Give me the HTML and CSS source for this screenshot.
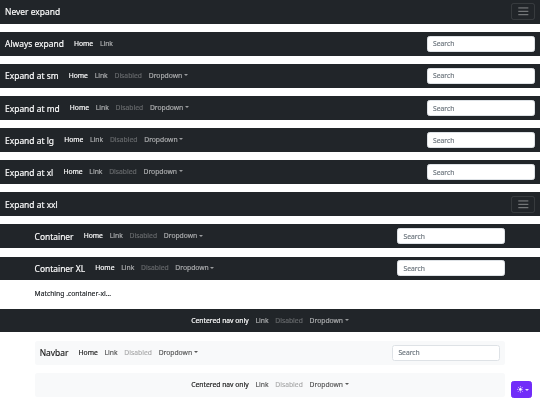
FILE: index.html
```html
<!DOCTYPE html>
<html lang="en">
<head>
<meta charset="utf-8">
<title>Navbar examples</title>
<link rel="stylesheet" href="styles.css">
</head>
<body>
<main class="page">
  <nav class="navbar dark">
    <div class="cfluid">
      <a class="brand" href="#">Never expand</a>
      <button class="toggler" type="button" aria-label="Toggle navigation"><svg viewBox="0 0 30 30" class="toggler-icon"><path d="M4 7h22M4 15h22M4 23h22" stroke="rgba(255,255,255,0.55)" stroke-width="2" stroke-linecap="round"/></svg></button>
    </div>
  </nav>

  <nav class="navbar dark">
    <div class="cfluid">
      <a class="brand" href="#">Always expand</a>
      <div class="collapse">
        <ul class="nav me-auto">
          <li><a class="link active" href="#">Home</a></li>
          <li><a class="link" href="#">Link</a></li>
        </ul>
        <form role="search"><input class="search" type="search" placeholder="Search" aria-label="Search"></form>
      </div>
    </div>
  </nav>

  <nav class="navbar dark">
    <div class="cfluid">
      <a class="brand" href="#">Expand at sm</a>
      <div class="collapse">
        <ul class="nav me-auto">
          <li><a class="link active" href="#">Home</a></li>
          <li><a class="link" href="#">Link</a></li>
          <li><a class="link disabled">Disabled</a></li>
          <li><a class="link caret" href="#">Dropdown</a></li>
        </ul>
        <form role="search"><input class="search" type="search" placeholder="Search" aria-label="Search"></form>
      </div>
    </div>
  </nav>

  <nav class="navbar dark">
    <div class="cfluid">
      <a class="brand" href="#">Expand at md</a>
      <div class="collapse">
        <ul class="nav me-auto">
          <li><a class="link active" href="#">Home</a></li>
          <li><a class="link" href="#">Link</a></li>
          <li><a class="link disabled">Disabled</a></li>
          <li><a class="link caret" href="#">Dropdown</a></li>
        </ul>
        <form role="search"><input class="search" type="search" placeholder="Search" aria-label="Search"></form>
      </div>
    </div>
  </nav>

  <nav class="navbar dark">
    <div class="cfluid">
      <a class="brand" href="#">Expand at lg</a>
      <div class="collapse">
        <ul class="nav me-auto">
          <li><a class="link active" href="#">Home</a></li>
          <li><a class="link" href="#">Link</a></li>
          <li><a class="link disabled">Disabled</a></li>
          <li><a class="link caret" href="#">Dropdown</a></li>
        </ul>
        <form role="search"><input class="search" type="search" placeholder="Search" aria-label="Search"></form>
      </div>
    </div>
  </nav>

  <nav class="navbar dark">
    <div class="cfluid">
      <a class="brand" href="#">Expand at xl</a>
      <div class="collapse">
        <ul class="nav me-auto">
          <li><a class="link active" href="#">Home</a></li>
          <li><a class="link" href="#">Link</a></li>
          <li><a class="link disabled">Disabled</a></li>
          <li><a class="link caret" href="#">Dropdown</a></li>
        </ul>
        <form role="search"><input class="search" type="search" placeholder="Search" aria-label="Search"></form>
      </div>
    </div>
  </nav>

  <nav class="navbar dark">
    <div class="cfluid">
      <a class="brand" href="#">Expand at xxl</a>
      <button class="toggler" type="button" aria-label="Toggle navigation"><svg viewBox="0 0 30 30" class="toggler-icon"><path d="M4 7h22M4 15h22M4 23h22" stroke="rgba(255,255,255,0.55)" stroke-width="2" stroke-linecap="round"/></svg></button>
    </div>
  </nav>

  <nav class="navbar dark">
    <div class="container">
      <a class="brand" href="#">Container</a>
      <div class="collapse">
        <ul class="nav me-auto">
          <li><a class="link active" href="#">Home</a></li>
          <li><a class="link" href="#">Link</a></li>
          <li><a class="link disabled">Disabled</a></li>
          <li><a class="link caret" href="#">Dropdown</a></li>
        </ul>
        <form role="search"><input class="search" type="search" placeholder="Search" aria-label="Search"></form>
      </div>
    </div>
  </nav>

  <nav class="navbar dark">
    <div class="container">
      <a class="brand" href="#">Container XL</a>
      <div class="collapse">
        <ul class="nav me-auto">
          <li><a class="link active" href="#">Home</a></li>
          <li><a class="link" href="#">Link</a></li>
          <li><a class="link disabled">Disabled</a></li>
          <li><a class="link caret" href="#">Dropdown</a></li>
        </ul>
        <form role="search"><input class="search" type="search" placeholder="Search" aria-label="Search"></form>
      </div>
    </div>
  </nav>

  <div class="container block mb-4">
    <p class="para">Matching .container-xl...</p>
  </div>

  <nav class="navbar dark">
    <div class="cfluid">
      <div class="collapse center">
        <ul class="nav">
          <li><a class="link active" href="#">Centered nav only</a></li>
          <li><a class="link" href="#">Link</a></li>
          <li><a class="link disabled">Disabled</a></li>
          <li><a class="link caret" href="#">Dropdown</a></li>
        </ul>
      </div>
    </div>
  </nav>

  <div class="container block">
    <nav class="navbar light rounded">
      <div class="cfluid">
        <a class="brand" href="#">Navbar</a>
        <div class="collapse">
          <ul class="nav me-auto">
            <li><a class="link active" href="#">Home</a></li>
            <li><a class="link" href="#">Link</a></li>
            <li><a class="link disabled">Disabled</a></li>
            <li><a class="link caret" href="#">Dropdown</a></li>
          </ul>
          <form role="search"><input class="search" type="search" placeholder="Search" aria-label="Search"></form>
        </div>
      </div>
    </nav>

    <nav class="navbar light rounded">
      <div class="cfluid">
        <div class="collapse center">
          <ul class="nav">
            <li><a class="link active" href="#">Centered nav only</a></li>
            <li><a class="link" href="#">Link</a></li>
            <li><a class="link disabled">Disabled</a></li>
            <li><a class="link caret" href="#">Dropdown</a></li>
          </ul>
        </div>
      </div>
    </nav>
  </div>
</main>

<button class="mode-toggle" type="button" aria-label="Toggle theme">
  <svg class="sun" viewBox="0 0 16 16" aria-hidden="true"><circle cx="8" cy="8" r="3.2" fill="#fff"/><g stroke="#fff" stroke-width="1.4" stroke-linecap="round"><path d="M8 .8v1.6M8 13.6v1.6M.8 8h1.6M13.6 8h1.6M2.9 2.9l1.1 1.1M12 12l1.1 1.1M2.9 13.1 4 12M12 4l1.1-1.1"/></g></svg>
  <span class="tcaret"></span>
</button>
</body>
</html>
```

FILE: styles.css
```css
html { background: #fff; }
body {
  margin: 0;
  font-family: "Noto Sans", "Open Sans", sans-serif;
  font-size: 6.75px;
  line-height: 10px;
  color: #212529;
  overflow: hidden;
}
.page {
  display: block;
  will-change: transform;
  -webkit-text-stroke: 0.15px currentColor;
}
a { text-decoration: none; }

.navbar {
  display: flex;
  align-items: center;
  justify-content: space-between;
  box-sizing: border-box;
  height: 23.625px;
  padding: 0;
  margin-bottom: 8.4375px;
}
.navbar.dark { background: #212529; }
.navbar.light { background: #f8f9fa; }
.rounded { border-radius: 2.53px; }

.cfluid {
  width: 100%;
  box-sizing: border-box;
  padding: 0 5.0625px;
  display: flex;
  align-items: center;
  justify-content: space-between;
}
.container {
  width: 480.9375px;
  box-sizing: border-box;
  margin: 0 auto;
  padding: 0 5.0625px;
  display: flex;
  align-items: center;
  justify-content: space-between;
}
.container.block { display: block; }
.mb-4 { margin-bottom: 10.125px; }
.para { margin: 0 0 6.75px; height: 10.125px; line-height: 10px; }

.brand {
  font-size: 8.4375px;
  line-height: 13px;
  padding: 0;
  margin-right: 6.75px;
  white-space: nowrap;
}
.dark .brand { color: #fff; }
.light .brand { color: rgba(0, 0, 0, 0.9); }

.collapse {
  display: flex;
  flex-grow: 1;
  align-items: center;
}
.collapse.center { justify-content: center; }

.nav {
  display: flex;
  list-style: none;
  margin: 0;
  padding: 0;
}
.me-auto { margin-right: auto; }

.link {
  display: block;
  padding: 0 3.375px;
  line-height: 10px;
  white-space: nowrap;
}
.dark .link { color: rgba(255, 255, 255, 0.55); }
.dark .link.active { color: #fff; }
.dark .link.disabled { color: rgba(255, 255, 255, 0.25); }
.light .link { color: rgba(0, 0, 0, 0.65); }
.light .link.active { color: rgba(0, 0, 0, 0.9); }
.light .link.disabled { color: rgba(0, 0, 0, 0.3); }

.caret::after {
  content: "";
  display: inline-block;
  margin-left: 0.255em;
  vertical-align: 0.255em;
  border-top: 0.3em solid;
  border-right: 0.3em solid transparent;
  border-left: 0.3em solid transparent;
}

form { margin: 0; }
.search {
  display: block;
  width: 108px;
  height: 16px;
  box-sizing: border-box;
  padding: 0 5.0625px;
  font-family: inherit;
  font-size: 6.75px;
  line-height: 10px;
  color: #212529;
  background: #fff;
  border: 0.5px solid #dee2e6;
  border-radius: 2.53px;
  outline: none;
  -webkit-appearance: none;
  appearance: none;
}
.search::placeholder { color: #6c757d; }

.toggler {
  display: flex;
  align-items: center;
  justify-content: center;
  box-sizing: border-box;
  width: 23.6px;
  height: 16.9px;
  padding: 0;
  margin: 0;
  background: transparent;
  border: 0.5px solid rgba(255, 255, 255, 0.1);
  border-radius: 2.53px;
}
.toggler-icon { width: 12.656px; height: 12.656px; display: block; }

.mode-toggle {
  position: fixed;
  right: 8px;
  bottom: 7px;
  display: flex;
  align-items: center;
  box-sizing: border-box;
  width: 21.5px;
  height: 17px;
  padding: 0 0 0 5px;
  margin: 0;
  background: #712cf9;
  border: 0.5px solid #712cf9;
  border-radius: 2.53px;
}
.sun { width: 6.75px; height: 6.75px; display: block; }
.tcaret {
  display: inline-block;
  margin-left: 1.7px;
  border-top: 2px solid rgba(255,255,255,0.85);
  border-right: 2px solid transparent;
  border-left: 2px solid transparent;
}
```
